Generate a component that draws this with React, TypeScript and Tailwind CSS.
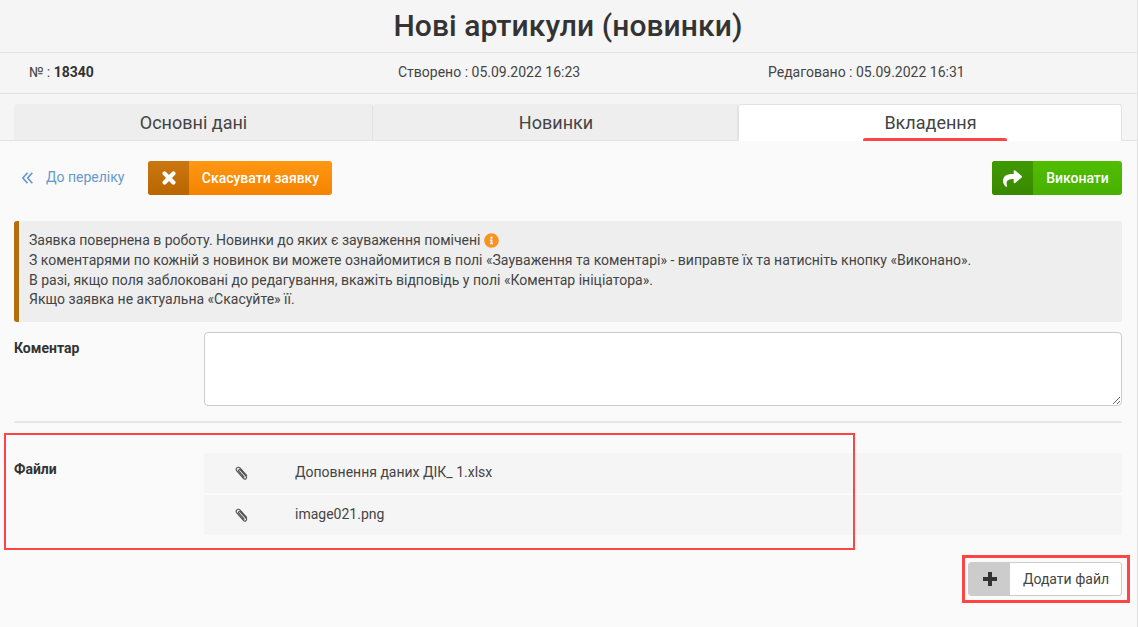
import React from "react";
import { FaShare, FaInfoCircle } from "react-icons/fa";

function ActionButton({ icon, label, iconBg, bg, width }: { icon: React.ReactNode; label: string; iconBg: string; bg: string; width: string }) {
  return (
    <button className={`flex h-[34px] ${width} items-stretch overflow-hidden rounded-[3px] text-[14px] font-medium text-white ${bg}`}>
      <span className={`flex w-[41px] shrink-0 items-center justify-center text-[19px] ${iconBg}`}>{icon}</span>
      <span className="flex flex-1 items-center justify-center">{label}</span>
    </button>
  );
}

function ClipIcon() {
  return (
    <svg width="14" height="14" viewBox="0 0 14 14" fill="none" stroke="#555" strokeWidth="1.2" strokeLinecap="round" strokeLinejoin="round">
      <path d="M11.6 9.4 5.2 2.2C4.2 1 2.7 1 1.8 1.9 .9 2.8 1 4.1 2 5.2l6.4 7.2c.7.8 1.8.9 2.5.3.8-.7.8-1.7.1-2.5L5.2 3.9c-.4-.4-1-.5-1.4-.1-.4.4-.4.9 0 1.4l5.2 5.8" />
    </svg>
  );
}

function FileRow({ name }: { name: string }) {
  return (
    <div className="flex h-[40px] items-center bg-[#f5f5f5] text-[14px] text-[#444]">
      <span className="flex w-[76px] justify-center"><ClipIcon /></span>
      <span className="mb-[1px] ml-[15px]">{name}</span>
    </div>
  );
}

export default function App() {
  return (
    <div className="relative h-[627px] w-[1138px] overflow-hidden border-r border-[#e2e2e2] bg-[#fafafa] font-['Roboto',sans-serif] text-[#333]">
      <header className="flex h-[53px] items-center justify-center border-b border-[#e2e2e2] bg-[#f5f5f5] pr-[1px]">
        <h1 className="text-[30px] font-medium leading-none tracking-[0.09px] text-[#333]">Нові артикули (новинки)</h1>
      </header>
      <div className="flex h-[41px] items-center border-b border-[#e2e2e2] bg-[#f5f5f5] pb-[2px] text-[14px] text-[#444]">
        <div className="w-[398px] pl-[29px]">№ : <b className="font-bold text-[#333]">18340</b></div>
        <div className="w-[370px]">Створено : 05.09.2022 16:23</div>
        <div>Редаговано : 05.09.2022 16:31</div>
      </div>
      <div className="flex h-[47px] items-end border-b border-[#e2e2e2] bg-[#f5f5f5] pl-[14px] pr-[15px]">
        <div className="flex h-[36px] w-[359px] items-center justify-center rounded-t-[3px] border-r border-[#e2e2e2] bg-[#eeeeee] pl-[1px] text-[18px] text-[#444]">Основні дані</div>
        <div className="flex h-[36px] w-[365px] items-center justify-center rounded-t-[3px] border-r border-[#e2e2e2] bg-[#eeeeee] pl-[2px] text-[18px] text-[#444]">Новинки</div>
        <div className="relative -mb-px flex h-[37px] flex-1 items-center justify-center rounded-t-[3px] border border-b-0 border-[#e2e2e2] bg-white pb-[2px] pl-[1px] text-[18px] text-[#444]">
          Вкладення
          <span className="absolute bottom-0 left-[124px] h-[3px] w-[144px] rounded-t-[2px] bg-[#ff4444]" />
        </div>
      </div>

      <main className="pl-[14px] pr-[15px]">
        <div className="flex h-[80px] items-center justify-between pb-[6px]">
          <div className="flex items-center">
            <a className="flex w-[134px] items-center pl-[8px] text-[14px] text-[#6699cc]">
              <svg width="11" height="12" viewBox="0 0 11 12" fill="none" stroke="#6699cc" strokeWidth="1.7">
                <path d="M5.5 .8.9 6l4.6 5.2M10.3 .8 5.7 6l4.6 5.2" />
              </svg>
              <span className="mb-[2px] ml-[13px]">До переліку</span>
            </a>
            <ActionButton
              icon={
                <svg width="14" height="14" viewBox="0 0 14 14" stroke="#fff" strokeWidth="4.2" strokeLinecap="round">
                  <path d="M2.6 2.6 11.4 11.4M11.4 2.6 2.6 11.4" />
                </svg>
              }
              label="Скасувати заявку"
              iconBg="bg-linear-to-b from-[#ca7611] to-[#b96500]"
              bg="bg-linear-to-b from-[#ff9713] to-[#f58300]"
              width="w-[184px]"
            />
          </div>
          <ActionButton
            icon={<FaShare />}
            label="Виконати"
            iconBg="bg-linear-to-b from-[#3f9a00] to-[#398800]"
            bg="bg-linear-to-b from-[#50bd00] to-[#48b000]"
            width="w-[130px]"
          />
        </div>

        <div className="h-[101px] rounded-[3px] border-l-[5px] border-[#b36d0c] bg-[#eeeeee] p-[10px] text-[14px] leading-[19.8px] text-[#444]">
          <div className="flex items-center">Заявка повернена в роботу. Новинки до яких є зауваження помічені <FaInfoCircle className="ml-[3px] text-[15px] text-[#f7931e]" /></div>
          <div>З коментарями по кожній з новинок ви можете ознайомитися в полі «Зауваження та коментарі» - виправте їх та натисніть кнопку «Виконано».</div>
          <div>В разі, якщо поля заблоковані до редагування, вкажіть відповідь у полі «Коментар ініціатора».</div>
          <div>Якщо заявка не актуальна «Скасуйте» її.</div>
        </div>

        <div className="mt-[10px] flex items-start border-b-2 border-[#e6e6e6] pb-[15px]">
          <label className="w-[190px] pt-[6px] text-[14px] font-bold text-[#333]">Коментар</label>
          <textarea className="block h-[74px] flex-1 rounded-[4px] border border-[#cccccc] bg-white" />
        </div>

        <div className="mt-[30px] flex items-start">
          <label className="w-[190px] pt-[6px] text-[14px] font-bold text-[#333]">Файли</label>
          <div className="flex flex-1 flex-col gap-[2px]">
            <FileRow name="Доповнення даних ДІК_ 1.xlsx" />
            <FileRow name="image021.png" />
          </div>
        </div>

        <div className="mt-[27px] flex justify-end">
          <button className="flex h-[34px] w-[154px] items-stretch overflow-hidden rounded-[3px] border border-[#cccccc] bg-white text-[14px] text-[#444]">
            <span className="flex w-[41px] shrink-0 items-center justify-center bg-[#cccccc]">
              <svg width="14" height="14" viewBox="0 0 14 14" stroke="#333" strokeWidth="4">
                <path d="M7 0v14M0 7h14" />
              </svg>
            </span>
            <span className="flex flex-1 items-center justify-center pl-[1px]">Додати файл</span>
          </button>
        </div>
      </main>

      <div className="absolute left-[4px] top-[433px] h-[117px] w-[851px] border-2 border-[#ff4444]" />
      <div className="absolute left-[962px] top-[555px] h-[48px] w-[168px] border-[3px] border-[#ff4444]" />
    </div>
  );
}
